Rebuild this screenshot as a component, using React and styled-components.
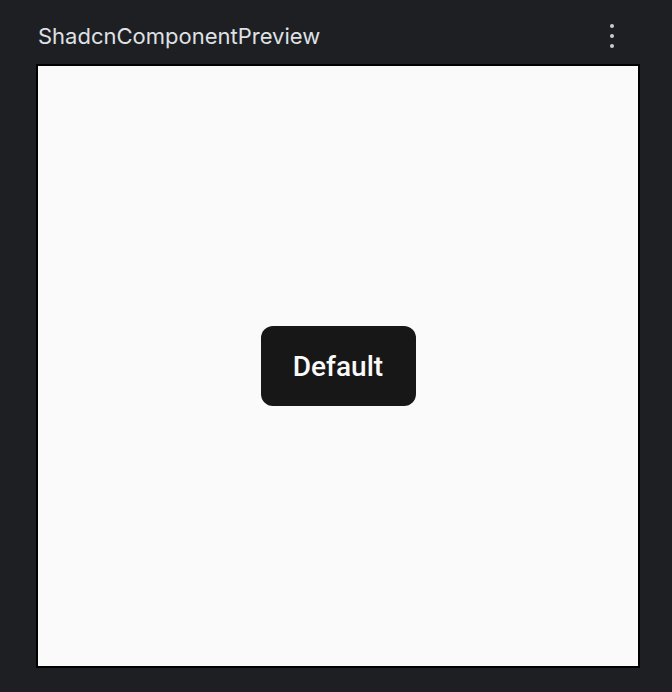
import React from "react";
import styled, { createGlobalStyle } from "styled-components";

const Global = createGlobalStyle`
  html, body { margin: 0; padding: 0; background: #1e1f22; }
  body { font-family: Inter, "Noto Sans", sans-serif; }
`;

const Page = styled.div`
  width: 672px;
  height: 692px;
  box-sizing: border-box;
  padding: 18px 32px 0 36px;
  display: flex;
  flex-direction: column;
  background: #1e1f22;
`;

const Header = styled.div`
  height: 36px;
  display: flex;
  align-items: center;
  justify-content: space-between;
  padding-left: 2px;
  margin-bottom: 10px;
`;

const Title = styled.div`
  font-family: Inter, sans-serif;
  font-size: 22px;
  color: #dfe1e5;
  letter-spacing: 0;
`;

const MenuButton = styled.div`
  width: 12px;
  display: flex;
  flex-direction: column;
  align-items: center;
  gap: 6px;
  margin-right: 22px;
`;

const Dot = styled.span`
  width: 4px;
  height: 4px;
  border-radius: 50%;
  background: #c9cbd0;
`;

const Preview = styled.div`
  width: 604px;
  height: 604px;
  box-sizing: border-box;
  border: 2px solid #000;
  background: #fafafa;
  display: flex;
  align-items: center;
  justify-content: center;
`;

const Button = styled.button`
  width: 155px;
  height: 80px;
  border: none;
  border-radius: 12px;
  background: #171717;
  color: #fafafa;
  font-family: Roboto, sans-serif;
  font-weight: 500;
  font-size: 28px;
  padding: 0;
  cursor: pointer;
`;

export default function App() {
  return (
    <>
      <Global />
      <Page>
        <Header>
          <Title>ShadcnComponentPreview</Title>
          <MenuButton>
            <Dot />
            <Dot />
            <Dot />
          </MenuButton>
        </Header>
        <Preview>
          <Button>Default</Button>
        </Preview>
      </Page>
    </>
  );
}
